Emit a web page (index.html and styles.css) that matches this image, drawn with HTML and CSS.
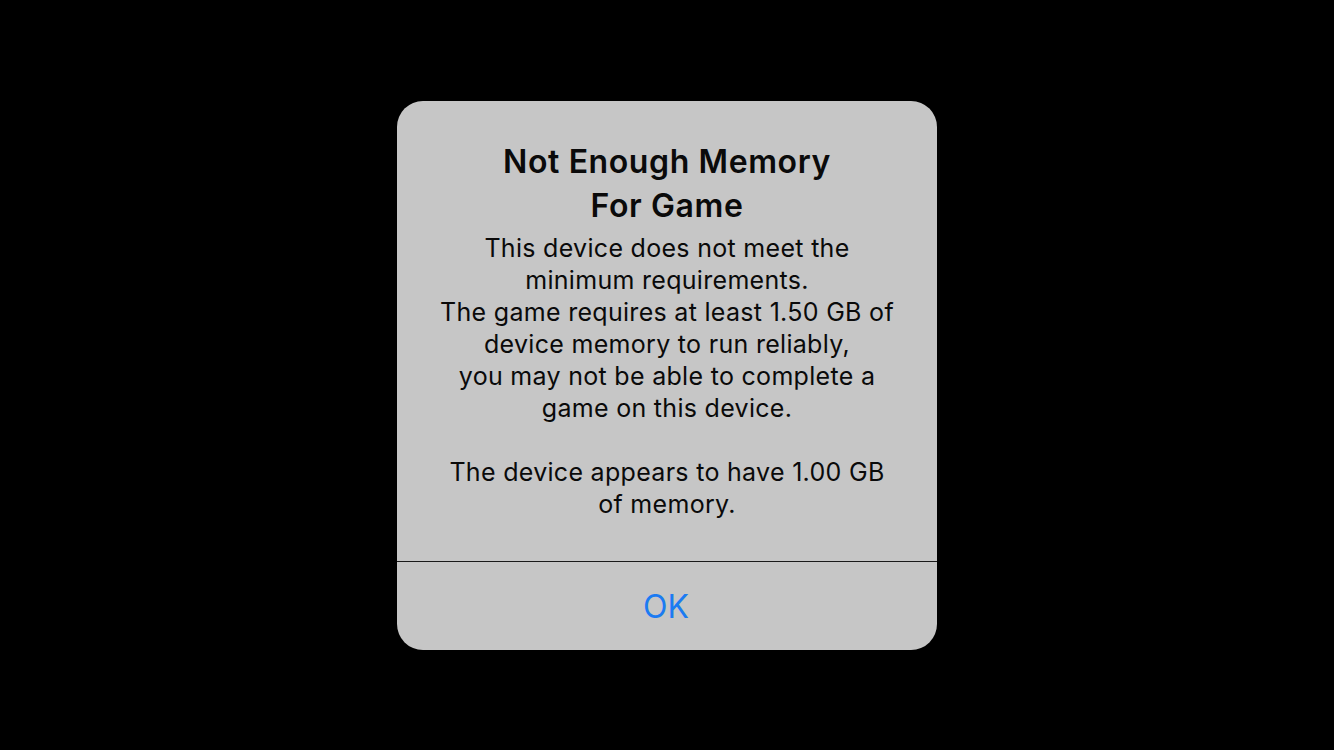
FILE: index.html
```html
<!DOCTYPE html>
<html lang="en">
<head>
  <meta charset="UTF-8">
  <title>Not Enough Memory</title>
  <link rel="stylesheet" href="styles.css">
</head>
<body>

  <div class="alert">
    <div class="alert-content">
      <h1 class="alert-title">Not Enough Memory<br>For Game</h1>
      <p class="alert-message">This device does not meet the<br>minimum requirements.<br>The game requires at least 1.50 GB of<br>device memory to run reliably,<br>you may not be able to complete a<br>game on this device.<br><br>The device appears to have 1.00 GB<br>of memory.</p>
    </div>
    <button type="button" class="alert-button">OK</button>
  </div>

</body>
</html>
```

FILE: styles.css
```css
body {
  display: flex;
  justify-content: center;
  align-items: center;
  height: 100vh;
  margin: 0;
  background-color: #000;
  font-family: Inter, "Liberation Sans", sans-serif;
}

.alert {
  width: 540px;
  height: 549px;
  display: flex;
  flex-direction: column;
  background-color: #c6c6c6;
  border-radius: 26px;
  overflow: hidden;
}

.alert-content {
  flex: 1;
  padding: 39px 10px 0;
  text-align: center;
  color: #0a0a0a;
  border-bottom: 1px solid #1a1a1a;
}

.alert-title {
  margin: 0 0 4px;
  font-size: 32px;
  font-weight: 600;
  line-height: 44px;
  letter-spacing: 0.6px;
}

.alert-message {
  margin: 0;
  font-size: 25px;
  font-weight: 400;
  line-height: 32px;
  letter-spacing: 0.3px;
}

.alert-button {
  height: 88px;
  border: none;
  background: none;
  padding: 2px 2px 0 0;
  color: #1b7bf2;
  font-family: Inter, "Liberation Sans", sans-serif;
  font-size: 32px;
  cursor: pointer;
}
```
